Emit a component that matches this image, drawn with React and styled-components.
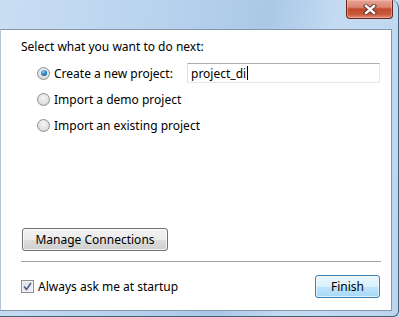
import React from 'react';
import styled, { createGlobalStyle } from 'styled-components';

const Global = createGlobalStyle`
	html, body {
		margin: 0;
		padding: 0;
		background: #c4daf0;
	}
	body {
		font-family: "Noto Sans", "Open Sans", sans-serif;
		font-size: 12px;
		color: #000;
	}
`

const Frame = styled.div`
	width: 399px;
	height: 317px;
	box-sizing: border-box;
	display: flex;
	flex-direction: column;
	background: linear-gradient(100deg, #c9def3 0%, #b9d3ee 35%, #aac8e6 60%, #c4dbf2 75%, #bcd5ee 100%);
	border-right: 1px solid #4a5f78;
	border-bottom: 1px solid #4a5f78;
	border-top-right-radius: 8px;
	border-bottom-right-radius: 6px;
	padding-right: 5px;
	padding-bottom: 5px;
	overflow: hidden;
`

const TitleBar = styled.div`
	height: 29px;
	display: flex;
	justify-content: flex-end;
	align-items: flex-start;
`

const CloseButton = styled.div`
	width: 45px;
	height: 18px;
	border: 1px solid #6b261a;
	border-top: none;
	border-radius: 0 0 4px 4px;
	background: linear-gradient(180deg, #e8a596 0%, #d98570 40%, #c24a2e 50%, #c95a3c 80%, #e0917a 100%);
	box-shadow: inset 0 0 0 1px rgba(255, 200, 190, 0.45);
	display: flex;
	align-items: center;
	justify-content: center;
`

const Panel = styled.div`
	flex: 1;
	width: 392px;
	box-sizing: border-box;
	background: #fff;
	border: 1px solid #8497ad;
	border-left-color: #b7c4d4;
	padding: 9px 10px 12px 20px;
	display: flex;
	flex-direction: column;
`

const Heading = styled.div`
	line-height: 16px;
`

const Options = styled.div`
	margin-top: 5px;
	padding-left: 16px;
	display: flex;
	flex-direction: column;
`

const OptionRow = styled.label`
	height: 26px;
	display: flex;
	align-items: center;
	gap: 4px;
`

const Radio = styled.span`
	width: 11px;
	height: 11px;
	border-radius: 50%;
	border: 1px solid #8e8f8f;
	background: radial-gradient(circle at 50% 35%, #f4f4f4 0%, #e2e2e2 55%, #cfcfcf 100%);
	display: flex;
	align-items: center;
	justify-content: center;
	flex-shrink: 0;

	&::after {
		content: '';
		display: ${p => (p.checked ? 'block' : 'none')};
		width: 6px;
		height: 6px;
		border-radius: 50%;
		background: radial-gradient(circle at 40% 30%, #8fd3ff 0%, #2a86c9 45%, #0c4a84 100%);
	}
`

const OptionLabel = styled.span`
	width: ${p => (p.width ? p.width + 'px' : 'auto')};
`

const TextBox = styled.div`
	width: 193px;
	height: 20px;
	box-sizing: border-box;
	border: 1px solid #e3e9ef;
	border-top-color: #abadb3;
	border-left-color: #dbdfe6;
	padding-left: 3px;
	display: flex;
	align-items: center;
`

const Caret = styled.span`
	width: 1px;
	height: 14px;
	background: #000;
	margin-left: 1px;
`

const Spacer = styled.div`
	flex: 1;
`

const Button = styled.div`
	height: 23px;
	box-sizing: border-box;
	width: ${p => p.width}px;
	margin-left: ${p => (p.primary ? 0 : 1)}px;
	border: 1px solid ${p => (p.primary ? '#3c7fb1' : '#707070')};
	border-radius: 3px;
	display: flex;
	align-items: center;
	justify-content: center;
	background: ${p => (p.primary
		? 'linear-gradient(180deg, #eaf6fd 0%, #d9f0fc 50%, #bee6fd 51%, #a7d9f5 100%)'
		: 'linear-gradient(180deg, #f2f2f2 0%, #ebebeb 50%, #dddddd 51%, #cfcfcf 100%)')};
	box-shadow: inset 0 0 0 1px ${p => (p.primary ? 'rgba(255,255,255,0.6)' : 'rgba(255,255,255,0.7)')};
`

const Separator = styled.div`
	margin-top: 10px;
	height: 1px;
	width: 360px;
	background: #a0a0a0;
`

const Footer = styled.div`
	margin-top: 13px;
	display: flex;
	align-items: center;
	justify-content: space-between;
	padding-right: 1px;
`

const CheckRow = styled.label`
	display: flex;
	align-items: center;
	gap: 4px;
`

const Checkbox = styled.span`
	width: 11px;
	height: 11px;
	border: 1px solid #8e8f8f;
	background: linear-gradient(135deg, #dcdcdc 0%, #f4f4f4 100%);
	box-shadow: inset 0 0 0 1px #f4f4f4;
	display: flex;
	align-items: center;
	justify-content: center;
`

function CloseGlyph(){
	return(
		<svg width="14" height="11" viewBox="0 0 14 11">
			<path d="M3 2 L11 9 M11 2 L3 9" stroke="#5a2a22" strokeWidth="4.2" strokeLinecap="square" />
			<path d="M3 2 L11 9 M11 2 L3 9" stroke="#fff" strokeWidth="2.4" strokeLinecap="square" />
		</svg>
	)
}

function CheckGlyph(){
	return(
		<svg width="9" height="9" viewBox="0 0 9 9">
			<path d="M1 4.5 L3.5 7.5 L8 1" fill="none" stroke="#4a5f97" strokeWidth="1.6" />
		</svg>
	)
}

export default function App(){
	return(
		<>
			<Global />
			<Frame>
				<TitleBar>
					<CloseButton><CloseGlyph /></CloseButton>
				</TitleBar>
				<Panel>
					<Heading>Select what you want to do next:</Heading>
					<Options>
						<OptionRow>
							<Radio checked />
							<OptionLabel width={129}>Create a new project:</OptionLabel>
							<TextBox>project_di<Caret /></TextBox>
						</OptionRow>
						<OptionRow>
							<Radio />
							<OptionLabel>Import a demo project</OptionLabel>
						</OptionRow>
						<OptionRow>
							<Radio />
							<OptionLabel>Import an existing project</OptionLabel>
						</OptionRow>
					</Options>
					<Spacer />
					<Button width={146}>Manage Connections</Button>
					<Separator />
					<Footer>
						<CheckRow>
							<Checkbox><CheckGlyph /></Checkbox>
							Always ask me at startup
						</CheckRow>
						<Button primary width={65}>Finish</Button>
					</Footer>
				</Panel>
			</Frame>
		</>
	)
}
